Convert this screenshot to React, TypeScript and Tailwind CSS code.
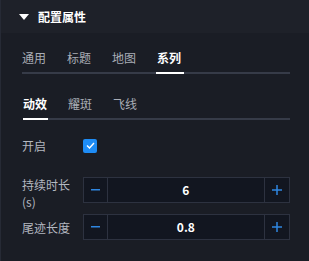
import React from "react";

const font = { fontFamily: '"Noto Sans CJK SC", "Liberation Sans", sans-serif' };

function Tabs({ items, active, wide }: { items: string[]; active: number; wide?: boolean }) {
  return (
    <div className="flex flex-col">
      <div className="flex gap-[21px] text-[12px] leading-[17px]">
        {items.map((t, i) => (
          <div key={t} className="relative flex flex-col">
            <span className={i === active ? "font-bold text-white" : "text-[#a9adb6]"}>{t}</span>
          </div>
        ))}
      </div>
      <div className="relative mt-[6px] h-[2px] bg-[#363b48]">
        <div
          className={`absolute top-0 h-[2px] bg-white ${wide ? "w-[28px]" : "w-[25px]"}`}
          style={{ left: active * 45 - (wide ? 1 : 0) }}
        />
      </div>
    </div>
  );
}

function Stepper({ value }: { value: string }) {
  return (
    <div className="flex h-[26px] w-[208px] border border-[#2d3240] bg-[#121620]">
      <div className="flex w-[24px] items-center justify-center border-r border-[#2d3240]">
        <svg width="9" height="2" viewBox="0 0 9 2">
          <rect x="0" y="0" width="9" height="1.5" fill="#2f86e0" />
        </svg>
      </div>
      <div className="flex flex-1 items-center justify-center text-[12px] font-bold text-white">{value}</div>
      <div className="flex w-[25px] items-center justify-center border-l border-[#2d3240]">
        <svg width="10" height="10" viewBox="0 0 10 10">
          <rect x="0" y="4.25" width="10" height="1.5" fill="#2f86e0" />
          <rect x="4.25" y="0" width="1.5" height="10" fill="#2f86e0" />
        </svg>
      </div>
    </div>
  );
}

export default function App() {
  return (
    <div className="h-[261px] w-[309px] overflow-hidden border-l border-[#262a35] bg-[#1a1d25]" style={font}>
      <div className="flex h-[33px] items-center gap-[9px] bg-[#1e2129] pl-[18px]">
        <svg width="10" height="6" viewBox="0 0 10 6">
          <polygon points="0,0 10,0 5,6" fill="#ffffff" />
        </svg>
        <span className="text-[12px] font-bold text-white">配置属性</span>
      </div>
      <div className="flex flex-col pl-[21px] pr-[19px]">
        <div className="mt-[16px]">
          <Tabs items={["通用", "标题", "地图", "系列"]} active={3} wide />
        </div>
        <div className="mt-[21px] pl-[1px]">
          <Tabs items={["动效", "耀斑", "飞线"]} active={0} />
        </div>
        <div className="mt-[17px] flex items-center">
          <span className="w-[61px] text-[12px] leading-[17px] text-[#b4b8c0]">开启</span>
          <div className="flex h-[14px] w-[14px] items-center justify-center rounded-[2px] bg-[#1e8cf5]">
            <svg width="9" height="7" viewBox="0 0 9 7">
              <polyline points="1,3.5 3.5,6 8,1" fill="none" stroke="#ffffff" strokeWidth="1.4" />
            </svg>
          </div>
        </div>
        <div className="mt-[23px] flex h-[26px] items-start">
          <span className="-mt-[1px] w-[61px] text-[12px] leading-[17px] text-[#b4b8c0]">
            持续时长
            <br />
            (s)
          </span>
          <Stepper value="6" />
        </div>
        <div className="mt-[11px] flex items-center">
          <span className="w-[61px] text-[12px] leading-[17px] text-[#b4b8c0]">尾迹长度</span>
          <Stepper value="0.8" />
        </div>
      </div>
    </div>
  );
}
